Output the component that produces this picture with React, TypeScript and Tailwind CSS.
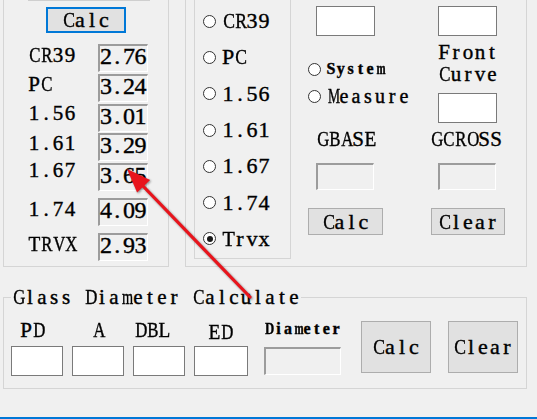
import clsx from "clsx";
import type { ReactNode } from "react";

// SimSun has narrow capitals; squeeze the wide Times letters into their cell
function squeeze(ch: string) {
  if ("MWmw".includes(ch)) return "scale-x-[0.68]";
  if ("ABCDGHKNOQRUVXY".includes(ch)) return "scale-x-[0.8]";
  if ("ELTZ".includes(ch)) return "scale-x-[0.92]";
  return "";
}

// SimSun-like look: serif glyphs centred in fixed-width cells
function Mono({ text, cell = "w-[12px]", className }: { text: string; cell?: string; className?: string }) {
  return (
    <span className={clsx("inline-flex whitespace-pre", className)}>
      {Array.from(text).map((ch, i) => (
        <span key={i} className={clsx("inline-block text-center", cell, squeeze(ch))}>
          {ch}
        </span>
      ))}
    </span>
  );
}

function TextBox({ className }: { className?: string }) {
  return <div className={clsx("shrink-0 border border-[#7a7a7a] bg-white", className)} />;
}

function ReadOnlyBox({ className, children }: { className?: string; children?: ReactNode }) {
  return (
    <div
      className={clsx(
        "shrink-0 border-t-2 border-l-2 border-r border-b border-t-[#9c9c9c] border-l-[#9c9c9c] border-r-white border-b-white bg-[#f0f0f0]",
        className
      )}
    >
      {children}
    </div>
  );
}

function Btn({ label, className }: { label: string; className?: string }) {
  return (
    <button
      className={clsx(
        "flex shrink-0 items-center justify-center bg-[#e1e1e1] text-[22px] leading-[22px]",
        className
      )}
    >
      <Mono text={label} />
    </button>
  );
}

function Radio({ checked }: { checked?: boolean }) {
  return (
    <span className="flex h-[13px] w-[13px] shrink-0 items-center justify-center rounded-full border border-[#333] bg-white">
      {checked && <span className="h-[6px] w-[6px] rounded-full bg-[#1a1a1a]" />}
    </span>
  );
}

const lensRows = [
  { label: "CR39", value: "2.76", row: "mt-[11px]", lab: "mt-[1px]" },
  { label: "PC", value: "3.24", row: "mt-[2px]", lab: "mt-0" },
  { label: "1.56", value: "3.01", row: "mt-[2px]", lab: "-mt-[1px]" },
  { label: "1.61", value: "3.29", row: "mt-[1px]", lab: "mt-0" },
  { label: "1.67", value: "3.65", row: "mt-[2px]", lab: "-mt-[3px]" },
  { label: "1.74", value: "4.09", row: "mt-[7px]", lab: "mt-[1px]" },
  { label: "TRVX", value: "2.93", row: "mt-[7px]", lab: "mt-[1px]" },
];

const materials = ["CR39", "PC", "1.56", "1.61", "1.67", "1.74", "Trvx"];

const diameterFields = [
  { label: "PD", col: "ml-0 w-[52px]", lab: "ml-[9px] mt-[12px]", box: "mt-[6px] w-[52px]" },
  { label: "A", col: "ml-[9px] w-[52px]", lab: "ml-[20px] mt-[12px]", box: "mt-[6px] w-[52px]" },
  { label: "DBL", col: "ml-[9px] w-[52px]", lab: "ml-[1px] mt-[12px]", box: "mt-[6px] w-[52px]" },
  { label: "ED", col: "ml-[9px] w-[54px]", lab: "ml-[14px] mt-[14px]", box: "mt-[4px] w-[54px]" },
];

export default function App() {
  return (
    <div className="relative flex h-[419px] w-[537px] flex-col overflow-hidden bg-[#f0f0f0] [font-family:'Liberation_Serif',serif] text-black [-webkit-text-stroke:0.4px_#000]">
      <div className="flex h-[267px] shrink-0 items-start">
        {/* lens index results */}
        <div className="ml-[3px] flex h-[267px] w-[166px] flex-col border-x border-b border-[#d5d5d5]">
          <div className="ml-[24px] h-px w-[122px] bg-[#cfcfcf]" />
          <Btn label="Calc" className="ml-[42px] mt-[6px] h-[26px] w-[80px] border-2 border-[#0078d7]" />
          {lensRows.map((r) => (
            <div key={r.label} className={clsx("ml-[24px] flex items-start", r.row)}>
              <div className={clsx("w-[70px] text-[21px] leading-[20px]", r.lab)}>
                <Mono text={r.label} />
              </div>
              <ReadOnlyBox className="h-[28px] w-[50px] text-[24px] leading-[20px]">
                <Mono text={r.value} cell="w-[11.5px]" />
              </ReadOnlyBox>
            </div>
          ))}
        </div>

        {/* base curve */}
        <div className="ml-[16px] flex h-[267px] w-[342px] items-start border-x border-b border-[#d5d5d5]">
          <div className="ml-[8px] flex h-[259px] w-[97px] flex-col border-x border-b border-[#d5d5d5] pl-[8px] pt-[3px]">
            {materials.map((m) => (
              <div key={m} className="flex h-[36.3px] items-center gap-[6px] text-[22px] leading-[22px]">
                <Radio checked={m === "Trvx"} />
                <Mono text={m} />
              </div>
            ))}
          </div>

          <div className="ml-[17px] flex w-[122px] flex-col">
            <TextBox className="ml-[8px] mt-[6px] h-[30px] w-[59px]" />
            <div className="mt-[23px] flex h-[20px] items-center gap-[5px]">
              <Radio />
              <Mono text="System" cell="w-[9.8px]" className="text-[16px] font-bold" />
            </div>
            <div className="mt-[7px] flex h-[20px] items-center gap-[5px]">
              <Radio />
              <Mono text="Measure" cell="w-[12px]" className="text-[20px]" />
            </div>
            <div className="ml-[8px] mt-[23px] text-[21px] leading-[20px]">
              <Mono text="GBASE" />
            </div>
            <ReadOnlyBox className="ml-[8px] mt-[14px] h-[27px] w-[58px]" />
            <Btn label="Calc" className="mt-[18px] h-[27px] w-[75px] border border-[#adadad]" />
          </div>

          <div className="flex w-[80px] flex-col">
            <TextBox className="ml-[8px] mt-[6px] h-[30px] w-[59px]" />
            <div className="ml-[8px] mt-[5px] flex flex-col text-[21px] leading-[22px]">
              <Mono text="Front" />
              <Mono text="Curve" />
            </div>
            <TextBox className="ml-[8px] mt-[8px] h-[30px] w-[59px]" />
            <div className="mt-[6px] text-[21px] leading-[20px]">
              <Mono text="GCROSS" />
            </div>
            <ReadOnlyBox className="ml-[8px] mt-[14px] h-[27px] w-[58px]" />
            <Btn label="Clear" className="ml-[1px] mt-[18px] h-[27px] w-[74px] border border-[#adadad]" />
          </div>
        </div>
      </div>

      {/* glass diameter */}
      <fieldset className="ml-[3px] mt-[19px] w-[524px] border border-[#d5d5d5] pb-[12px]">
        <legend className="ml-[7px] px-[1px] text-[21px] leading-[22px]">
          <Mono text="Glass Diameter Calculate" />
        </legend>
        <div className="flex items-start pl-[7px]">
          {diameterFields.map((f) => (
            <div key={f.label} className={clsx("flex flex-col", f.col)}>
              <div className={clsx("text-[21px] leading-[20px]", f.lab)}>
                <Mono text={f.label} />
              </div>
              <TextBox className={clsx("h-[30px]", f.box)} />
            </div>
          ))}
          <div className="ml-[16px] flex w-[77px] flex-col">
            <div className="mt-[11px] text-[16px] font-bold leading-[20px]">
              <Mono text="Diameter" cell="w-[9.6px]" />
            </div>
            <ReadOnlyBox className="mt-[8px] h-[28px] w-[77px]" />
          </div>
          <Btn label="Calc" className="ml-[20px] mt-[13px] h-[52px] w-[70px] border border-[#adadad]" />
          <Btn label="Clear" className="ml-[17px] mt-[13px] h-[52px] w-[70px] border border-[#adadad]" />
        </div>
      </fieldset>

      <div className="mt-auto h-[2px] bg-[#0078d7]" />

      {/* annotation arrow */}
      <svg
        className="pointer-events-none absolute left-0 top-0 drop-shadow-[1px_1px_1px_rgba(0,0,0,0.45)]"
        width="537"
        height="419"
        viewBox="0 0 537 419"
      >
        <line x1="250" y1="297" x2="142" y2="185" stroke="#e8141c" strokeWidth="3.2" strokeLinecap="round" />
        <polygon points="127,169 150.1,180.1 137.1,192.5" fill="#e8141c" />
      </svg>
    </div>
  );
}
